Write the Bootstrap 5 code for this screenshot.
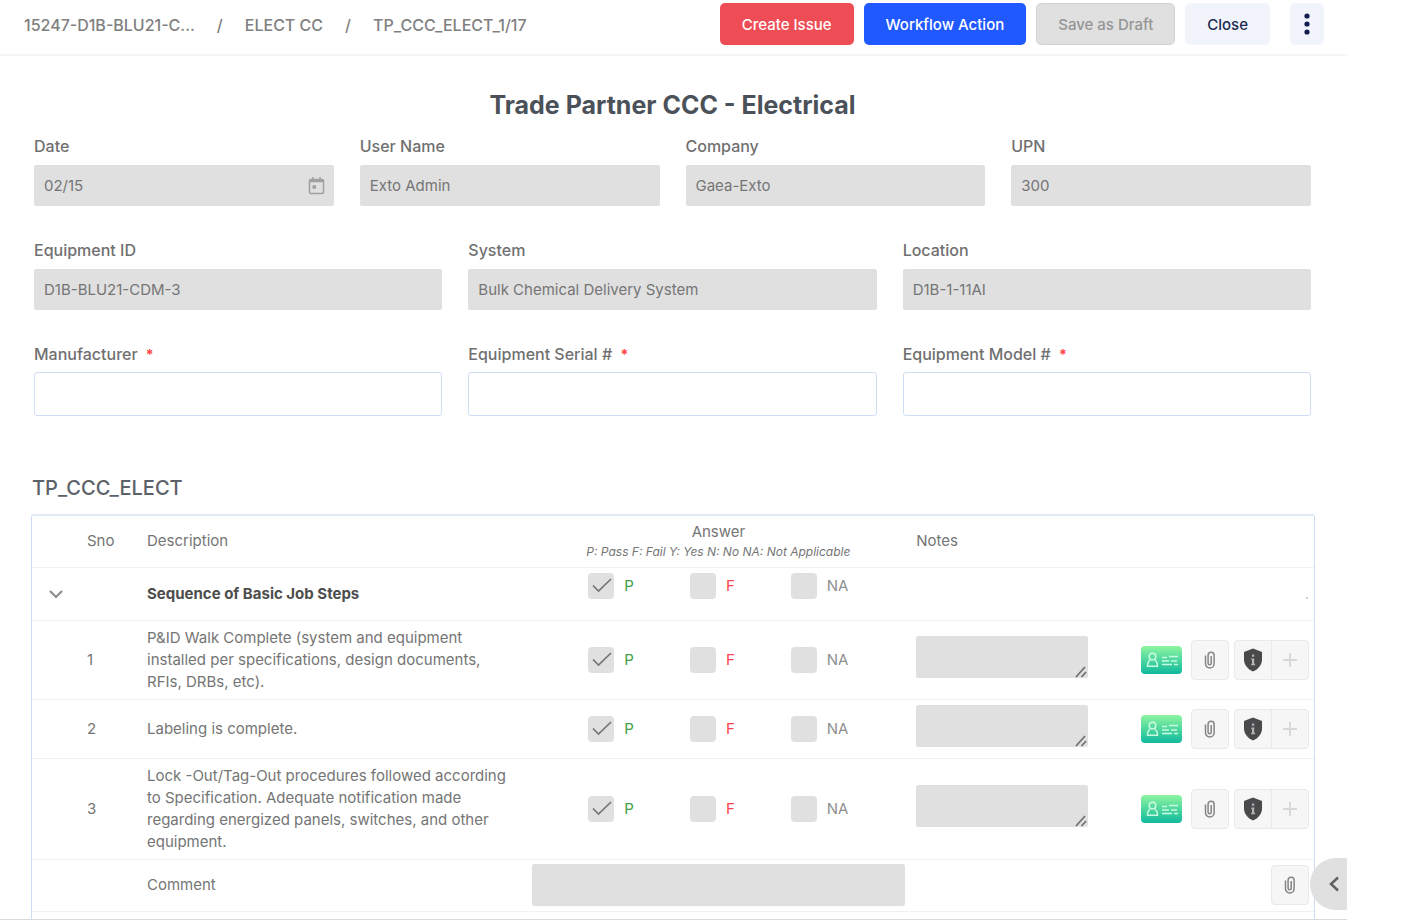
<!DOCTYPE html>
<html lang="en">
<head>
<meta charset="utf-8">
<meta name="viewport" content="width=device-width, initial-scale=1">
<title>Trade Partner CCC - Electrical</title>
<link href="https://cdn.jsdelivr.net/npm/bootstrap@5.3.0/dist/css/bootstrap.min.css" rel="stylesheet">
<style>
  body { font-family: Inter, "Liberation Sans", sans-serif; font-size: 15px; line-height: 22px; color: #757575; background: #fff; }
  .app-shell { margin-right: 54px; border-bottom: 1px solid #d9dadd; }
  .top-bar { height: 56px; padding: 0 23px 6px 24px; border-bottom: 2px solid #f4f5f9; }
  .breadcrumb { --bs-breadcrumb-item-padding-x: 22px; --bs-breadcrumb-divider-color: #808080; font-size: 16px; font-weight: 500; padding-top: 2px; }
  .breadcrumb a { color: #808080; text-decoration: none; }
  .top-actions { gap: 10px; }
  .top-bar .btn { height: 42px; padding: 2px 21px 0; font-size: 15px; font-weight: 500; border-radius: 5px; border-width: 1px; }
  .btn-issue, .btn-issue:hover { background: #ef4d56; color: #fff; }
  .btn-flow, .btn-flow:hover { background: #1f59ff; color: #fff; }
  .btn-draft:disabled { background: #e0e0e0; border-color: #d4d4d4; color: #959595; opacity: 1; }
  .btn-soft, .btn-soft:hover { background: #f1f5fb; color: #1d2951; }
  .top-bar .btn-more { width: 34px; padding: 0; margin-left: 10px; }
  .form-body { padding: 33px 36px 0 34px; }
  .form-title { font-size: 25px; line-height: 32px; font-weight: 700; color: #4b5159; margin-bottom: 14px; }
  .field-row { --bs-gutter-x: 26px; margin-bottom: 33px; }
  .form-label { font-size: 16px; line-height: 22px; font-weight: 500; margin-bottom: 8px; color: #707070; display: block; }
  .form-control { height: 41px; padding: 0 9px; font-size: 15px; border-radius: 2px; color: #757575; }
  .form-control:disabled { background: #e0e0e0; border-color: #e0e0e0; color: #757575; opacity: 1; }
  .input-open { height: 44px; border: 1px solid #cfdef5; border-radius: 3px; }
  .label-open { margin-bottom: 7px; }
  .required { color: #f44; margin-left: 4px; font-size: 14px; font-weight: 700; line-height: 16px; }
  .calendar-icon { right: 8px; top: 11px; }
  .section-title { font-size: 20px; line-height: 26px; font-weight: 500; color: #5d6269; margin: 59px 0 13px 32px; }
  .check-frame { margin: 0 32px 0 31px; border: 2px solid #dde8f6; border-width: 2px 1px 0; border-color: #e3ecf6 #cbdcf4; border-radius: 3px 3px 0 0; padding-bottom: 7px; }
  .check-table { table-layout: fixed; margin: 0; --bs-table-color: #757575; color: #757575; }
  .check-table > :not(caption) > * > * { padding: 0; border-bottom: 1px solid #eff1f3; background: transparent; box-shadow: none; color: inherit; vertical-align: middle; font-weight: 400; }
  .c-toggle { width: 55px; } .c-sno { width: 60px; } .c-wide { width: 30%; } .c-tools { width: 200px; }
  .row-head { height: 51px; } .row-std { height: 53px; } .row-one { height: 79px; } .row-two { height: 59px; } .row-three { height: 101px; }
  .row-last { height: 52px; }
  .check-table .desc { padding-right: 16px; }
  .check-table .group-name { font-weight: 700; color: #4d4d4d; }
  .check-table .answer { padding-right: 11px; text-align: center; }
  .check-table .answer-top { vertical-align: top; padding-top: 5px; }
  .legend-line { font-size: 12px; line-height: 18px; font-style: italic; }
  .choices { display: flex; justify-content: center; gap: 56px; }
  .choice { display: flex; align-items: center; gap: 10px; }
  .choice .form-check-input { width: 26px; height: 26px; margin: 0; border: 0; border-radius: 4px; background-color: #e0e0e0; opacity: 1; }
  .choice .form-check-input:disabled ~ label { opacity: 1; }
  .form-check-input:checked[type=checkbox] { background-image: url("data:image/svg+xml,%3csvg xmlns='http://www.w3.org/2000/svg' viewBox='0 0 26 26'%3e%3cpath fill='none' stroke='%23757575' stroke-width='1.700' d='M5 12.500l5.500 5.500L23 6'/%3e%3c/svg%3e"); background-size: 100%; }
  .pass { color: #43a047; } .fail { color: #ff4250; } .na { color: #909090; }
  .check-table .notes { padding-bottom: 6px; }
  .note-box { width: 172px; }
  .note-box textarea, .comment-box { height: 42px; min-height: 0; resize: none; display: block; }
  .note-grip { right: 1px; bottom: 0; }
  .tools { display: flex; justify-content: flex-end; align-items: center; gap: 5px; padding-right: 5px; }
  .tool-dot { color: #c4c4c4; }
  .tool-btn { width: 38px; height: 40px; padding: 0; display: flex; align-items: center; justify-content: center; background: #f6f6f6; border: 1px solid #e9e9e9; border-radius: 4px; }
  .tool-btn:disabled { background: #f6f6f6; border-color: #e9e9e9; opacity: 1; }
  .card-btn { border: 0; padding: 0; display: flex; background: none; margin-right: 4px; }
  .side-handle { right: 0; bottom: 9px; width: 37px; height: 52px; border: 0; padding: 0 0 0 10px; background: #e0e0e0; border-radius: 26px 0 0 26px; }
  svg { display: block; }
</style>
</head>
<body>
<svg width="0" height="0" class="position-absolute" aria-hidden="true">
  <defs>
    <linearGradient id="mint" x1="0" y1="0" x2="0" y2="1"><stop offset="0" stop-color="#8df5a0"/><stop offset="1" stop-color="#0fb99d"/></linearGradient>
    <symbol id="i-card" viewBox="0 0 41 28">
      <rect width="41" height="28" rx="4" fill="url(#mint)"/>
      <g fill="none" stroke="#c9fbe0" stroke-width="1.500"><circle cx="11.500" cy="10.500" r="3.300"/><path d="M9.500 13.500C7.500 15 6.500 17 6.500 20.300h10c0-3.300-1-5.300-3-6.800M21 11.500h5M28 10.500h9M21 15h7M30 15h6M21 18.500h10M33 18.500h4"/></g>
    </symbol>
    <symbol id="i-clip" viewBox="0 0 12 18"><path d="M1.500 4.500v8.300a4.200 4.200 0 0 0 8.600 0V4.200a3 3 0 0 0-6 0v8.100a1.500 1.500 0 0 0 3.100 0V5" fill="none" stroke="#858585" stroke-width="1.500"/></symbol>
    <symbol id="i-shield" viewBox="0 0 20 24"><path d="M10 .5 19 4v7.500c0 5.200-3.600 9.800-9 12-5.400-2.200-9-6.800-9-12V4z" fill="#4a4a4c"/><path d="M9 6.500h2.200v2.300H9zM8.300 10.500h2.900v5.300h.9v1.500H8.200v-1.500H9V12h-.7z" fill="#b5b5b5"/></symbol>
    <symbol id="i-plus" viewBox="0 0 16 16"><path d="M8 1v14M1 8h14" stroke="#d8d8d8" stroke-width="2"/></symbol>
    <symbol id="i-grip" viewBox="0 0 12 12"><path d="M1 11 10 1M6.500 11 11 6" stroke="#6e6e6e" stroke-width="1.700"/></symbol>
  </defs>
</svg>

<div class="app-shell position-relative">
  <header class="top-bar d-flex align-items-center justify-content-between">
    <nav aria-label="breadcrumb">
      <ol class="breadcrumb mb-0">
        <li class="breadcrumb-item"><a href="#">15247-D1B-BLU21-C...</a></li>
        <li class="breadcrumb-item"><a href="#">ELECT CC</a></li>
        <li class="breadcrumb-item"><a href="#">TP_CCC_ELECT_1/17</a></li>
      </ol>
    </nav>
    <div class="top-actions d-flex">
      <button type="button" class="btn btn-issue">Create Issue</button>
      <button type="button" class="btn btn-flow">Workflow Action</button>
      <button type="button" class="btn btn-draft" disabled>Save as Draft</button>
      <button type="button" class="btn btn-soft">Close</button>
      <button type="button" class="btn btn-soft btn-more d-flex align-items-center justify-content-center" aria-label="More actions">
        <svg width="6" height="22" viewBox="0 0 6 22" fill="#141c50"><circle cx="3" cy="3" r="2.600"/><circle cx="3" cy="11" r="2.600"/><circle cx="3" cy="19" r="2.600"/></svg>
      </button>
    </div>
  </header>

  <main>
    <form class="form-body">
      <h1 class="form-title text-center">Trade Partner CCC - Electrical</h1>
      <div class="row field-row">
        <div class="col-3"><label class="form-label" for="date">Date</label>
          <div class="position-relative"><input id="date" class="form-control" value="02/15" disabled>
            <svg class="calendar-icon position-absolute" width="18" height="20" viewBox="0 0 18 20" fill="none" stroke="#a0a0a0"><rect x="1.500" y="3.500" width="14" height="14" rx="1.500" stroke-width="1.500"/><path d="M1.500 5h14" stroke-width="2.500"/><path d="M5 1v4M12 1v4" stroke-width="1.500"/><path d="M4.500 11h3.500" stroke-width="3.500"/></svg>
          </div></div>
        <div class="col-3"><label class="form-label" for="user">User Name</label><input id="user" class="form-control" value="Exto Admin" disabled></div>
        <div class="col-3"><label class="form-label" for="company">Company</label><input id="company" class="form-control" value="Gaea-Exto" disabled></div>
        <div class="col-3"><label class="form-label" for="upn">UPN</label><input id="upn" class="form-control" value="300" disabled></div>
      </div>
      <div class="row field-row">
        <div class="col-4"><label class="form-label" for="equip">Equipment ID</label><input id="equip" class="form-control" value="D1B-BLU21-CDM-3" disabled></div>
        <div class="col-4"><label class="form-label" for="system">System</label><input id="system" class="form-control" value="Bulk Chemical Delivery System" disabled></div>
        <div class="col-4"><label class="form-label" for="location">Location</label><input id="location" class="form-control" value="D1B-1-11AI" disabled></div>
      </div>
      <div class="row field-row mb-0">
        <div class="col-4"><label class="form-label label-open" for="maker">Manufacturer <span class="required">*</span></label><input id="maker" class="form-control input-open"></div>
        <div class="col-4"><label class="form-label label-open" for="serial">Equipment Serial # <span class="required">*</span></label><input id="serial" class="form-control input-open"></div>
        <div class="col-4"><label class="form-label label-open" for="model">Equipment Model # <span class="required">*</span></label><input id="model" class="form-control input-open"></div>
      </div>
    </form>

    <h2 class="section-title">TP_CCC_ELECT</h2>
    <div class="check-frame">
      <table class="table check-table">
        <colgroup><col class="c-toggle"><col class="c-sno"><col class="c-wide"><col class="c-wide"><col><col class="c-tools"></colgroup>
        <thead>
          <tr class="row-head"><th></th><th>Sno</th><th>Description</th>
            <th class="answer">Answer<div class="legend-line">P: Pass F: Fail Y: Yes N: No NA: Not Applicable</div></th><th>Notes</th><th></th></tr>
        </thead>
        <tbody>
          <tr class="row-std">
            <td><button type="button" class="btn border-0 p-0 d-block ms-3" aria-label="Collapse group"><svg width="16" height="10" viewBox="0 0 16 10"><path d="M2 2l6 6 6-6" fill="none" stroke="#8a8a8a" stroke-width="2"/></svg></button></td>
            <td></td><td class="group-name">Sequence of Basic Job Steps</td>
            <td class="answer answer-top"><div class="choices">
              <div class="choice"><input class="form-check-input" type="checkbox" id="p0" checked disabled><label class="pass" for="p0">P</label></div>
              <div class="choice"><input class="form-check-input" type="checkbox" id="f0" disabled><label class="fail" for="f0">F</label></div>
              <div class="choice"><input class="form-check-input" type="checkbox" id="n0" disabled><label class="na" for="n0">NA</label></div></div></td>
            <td></td><td><div class="tools tool-dot">.</div></td>
          </tr>
          <tr class="row-one">
            <td></td><td>1</td><td class="desc">P&amp;ID Walk Complete (system and equipment installed per specifications, design documents, RFIs, DRBs, etc).</td>
            <td class="answer"><div class="choices">
              <div class="choice"><input class="form-check-input" type="checkbox" id="p1" checked disabled><label class="pass" for="p1">P</label></div>
              <div class="choice"><input class="form-check-input" type="checkbox" id="f1" disabled><label class="fail" for="f1">F</label></div>
              <div class="choice"><input class="form-check-input" type="checkbox" id="n1" disabled><label class="na" for="n1">NA</label></div></div></td>
            <td class="notes"><div class="note-box position-relative"><textarea class="form-control" aria-label="Notes 1" disabled></textarea><svg class="note-grip position-absolute" width="12" height="12"><use href="#i-grip"/></svg></div></td>
            <td><div class="tools"><button type="button" class="card-btn" aria-label="Badge"><svg width="41" height="28"><use href="#i-card"/></svg></button><button type="button" class="btn tool-btn" aria-label="Attach"><svg width="12" height="18"><use href="#i-clip"/></svg></button><div class="btn-group"><button type="button" class="btn tool-btn" aria-label="Issues"><svg width="20" height="24"><use href="#i-shield"/></svg></button><button type="button" class="btn tool-btn" aria-label="Add issue" disabled><svg width="16" height="16"><use href="#i-plus"/></svg></button></div></div></td>
          </tr>
          <tr class="row-two">
            <td></td><td>2</td><td class="desc">Labeling is complete.</td>
            <td class="answer"><div class="choices">
              <div class="choice"><input class="form-check-input" type="checkbox" id="p2" checked disabled><label class="pass" for="p2">P</label></div>
              <div class="choice"><input class="form-check-input" type="checkbox" id="f2" disabled><label class="fail" for="f2">F</label></div>
              <div class="choice"><input class="form-check-input" type="checkbox" id="n2" disabled><label class="na" for="n2">NA</label></div></div></td>
            <td class="notes"><div class="note-box position-relative"><textarea class="form-control" aria-label="Notes 2" disabled></textarea><svg class="note-grip position-absolute" width="12" height="12"><use href="#i-grip"/></svg></div></td>
            <td><div class="tools"><button type="button" class="card-btn" aria-label="Badge"><svg width="41" height="28"><use href="#i-card"/></svg></button><button type="button" class="btn tool-btn" aria-label="Attach"><svg width="12" height="18"><use href="#i-clip"/></svg></button><div class="btn-group"><button type="button" class="btn tool-btn" aria-label="Issues"><svg width="20" height="24"><use href="#i-shield"/></svg></button><button type="button" class="btn tool-btn" aria-label="Add issue" disabled><svg width="16" height="16"><use href="#i-plus"/></svg></button></div></div></td>
          </tr>
          <tr class="row-three">
            <td></td><td>3</td><td class="desc">Lock -Out/Tag-Out procedures followed according to Specification. Adequate notification made regarding energized panels, switches, and other equipment.</td>
            <td class="answer"><div class="choices">
              <div class="choice"><input class="form-check-input" type="checkbox" id="p3" checked disabled><label class="pass" for="p3">P</label></div>
              <div class="choice"><input class="form-check-input" type="checkbox" id="f3" disabled><label class="fail" for="f3">F</label></div>
              <div class="choice"><input class="form-check-input" type="checkbox" id="n3" disabled><label class="na" for="n3">NA</label></div></div></td>
            <td class="notes"><div class="note-box position-relative"><textarea class="form-control" aria-label="Notes 3" disabled></textarea><svg class="note-grip position-absolute" width="12" height="12"><use href="#i-grip"/></svg></div></td>
            <td><div class="tools"><button type="button" class="card-btn" aria-label="Badge"><svg width="41" height="28"><use href="#i-card"/></svg></button><button type="button" class="btn tool-btn" aria-label="Attach"><svg width="12" height="18"><use href="#i-clip"/></svg></button><div class="btn-group"><button type="button" class="btn tool-btn" aria-label="Issues"><svg width="20" height="24"><use href="#i-shield"/></svg></button><button type="button" class="btn tool-btn" aria-label="Add issue" disabled><svg width="16" height="16"><use href="#i-plus"/></svg></button></div></div></td>
          </tr>
          <tr class="row-last">
            <td></td><td></td><td><label for="comment">Comment</label></td>
            <td class="answer"><textarea id="comment" class="form-control comment-box" disabled></textarea></td>
            <td></td><td><div class="tools"><button type="button" class="btn tool-btn" aria-label="Attach"><svg width="12" height="18"><use href="#i-clip"/></svg></button></div></td>
          </tr>
        </tbody>
      </table>
    </div>
  </main>
  <button type="button" class="side-handle position-absolute d-flex align-items-center justify-content-center" aria-label="Open panel"><svg width="12" height="16" viewBox="0 0 12 16"><path d="M10 1.500 3 8l7 6.500" fill="none" stroke="#616161" stroke-width="2.500"/></svg></button>
</div>
<script src="https://cdn.jsdelivr.net/npm/bootstrap@5.3.0/dist/js/bootstrap.bundle.min.js"></script>
</body>
</html>
